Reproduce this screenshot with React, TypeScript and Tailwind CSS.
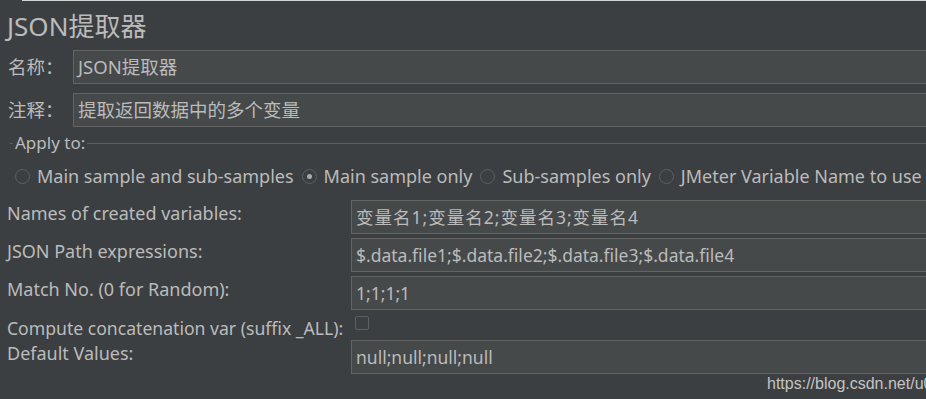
const font = { fontFamily: '"Noto Sans", "Noto Sans CJK SC", sans-serif' };

function Field({ value, className = '' }: { value: string; className?: string }) {
  return (
    <div
      className={`flex h-[34px] flex-1 items-center border border-[#646464] bg-[#45494a] pl-[4px] -mr-[4px] text-[#bbbbbb] ${className}`}
    >
      <span className="whitespace-nowrap">{value}</span>
    </div>
  );
}

function Radio({ label, checked = false }: { label: string; checked?: boolean }) {
  return (
    <div className="flex items-center gap-[7px]">
      <span className="flex h-[15px] w-[15px] items-center justify-center rounded-full border border-[#5e6163] bg-[#3c3f41]">
        {checked && <span className="h-[5px] w-[5px] rounded-full bg-[#a9abad]" />}
      </span>
      <span className="whitespace-nowrap">{label}</span>
    </div>
  );
}

const rows = [
  { label: 'Names of created variables:', value: '变量名1;变量名2;变量名3;变量名4', wide: true },
  { label: 'JSON Path expressions:', value: '$.data.file1;$.data.file2;$.data.file3;$.data.file4' },
  { label: 'Match No. (0 for Random):', value: '1;1;1;1' },
];

export default function App() {
  return (
    <div
      className="flex h-[399px] w-[926px] flex-col overflow-hidden bg-[#3c3f41] text-[#bbbbbb]"
      style={font}
    >
      <div className="ml-[22px] h-px bg-[#d4d4d4]" />

      <div className="flex h-[49px] items-center pl-[7px] text-[26px] leading-none">JSON提取器</div>

      <div className="flex items-center text-[18.5px]">
        <span className="w-[73px] shrink-0 pl-[8px]">名称：</span>
        <Field value="JSON提取器" />
      </div>
      <div className="mt-[9px] flex items-center text-[18.5px]">
        <span className="w-[73px] shrink-0 pl-[8px]">注释：</span>
        <Field value="提取返回数据中的多个变量" />
      </div>

      <div className="mt-[4px] flex items-center text-[17px]">
        <span className="ml-[10px] h-px w-[3px] bg-[#5b5e60]" />
        <span className="px-[2px] leading-[24px]">Apply to:</span>
        <span className="h-px flex-1 bg-[#5b5e60]" />
      </div>

      <div className="mt-[9px] flex items-center gap-[8px] pl-[15px] text-[18px] leading-[24px]">
        <Radio label="Main sample and sub-samples" />
        <Radio label="Main sample only" checked />
        <Radio label="Sub-samples only" />
        <Radio label="JMeter Variable Name to use" />
      </div>

      <div className="mt-[12px] flex flex-col text-[18px]">
        {rows.map((r, i) => (
          <div key={i} className={`flex items-start ${i > 0 ? 'mt-[4px]' : ''}`}>
            <span className="w-[351px] shrink-0 pl-[7px] pt-[2px] leading-[22px]">{r.label}</span>
            <Field value={r.value} className={r.wide ? 'text-[17.5px] tracking-[1px]' : 'text-[17.5px]'} />
          </div>
        ))}
        <div className="flex h-[30px] items-start">
          <span className="w-[351px] shrink-0 whitespace-nowrap pl-[7px] pt-[7px] text-[17.6px] leading-[22px]">
            Compute concatenation var (suffix _ALL):
          </span>
          <span className="ml-[4px] mt-[6px] h-[14px] w-[14px] shrink-0 rounded-[2px] border border-[#5e6163]" />
        </div>
        <div className="flex items-start">
          <span className="w-[351px] shrink-0 pl-[7px] pt-[2px] leading-[22px]">Default Values:</span>
          <Field value="null;null;null;null" className="text-[17.5px]" />
        </div>
        <div className="mt-px flex">
          <span className="w-[767px] shrink-0" />
          <span
            className="whitespace-nowrap text-[16px] leading-[18px] text-[#c4c4c4]"
            style={{ fontFamily: '"Liberation Sans", Arial, sans-serif' }}
          >
            https://blog.csdn.net/u0
          </span>
        </div>
      </div>
    </div>
  );
}
